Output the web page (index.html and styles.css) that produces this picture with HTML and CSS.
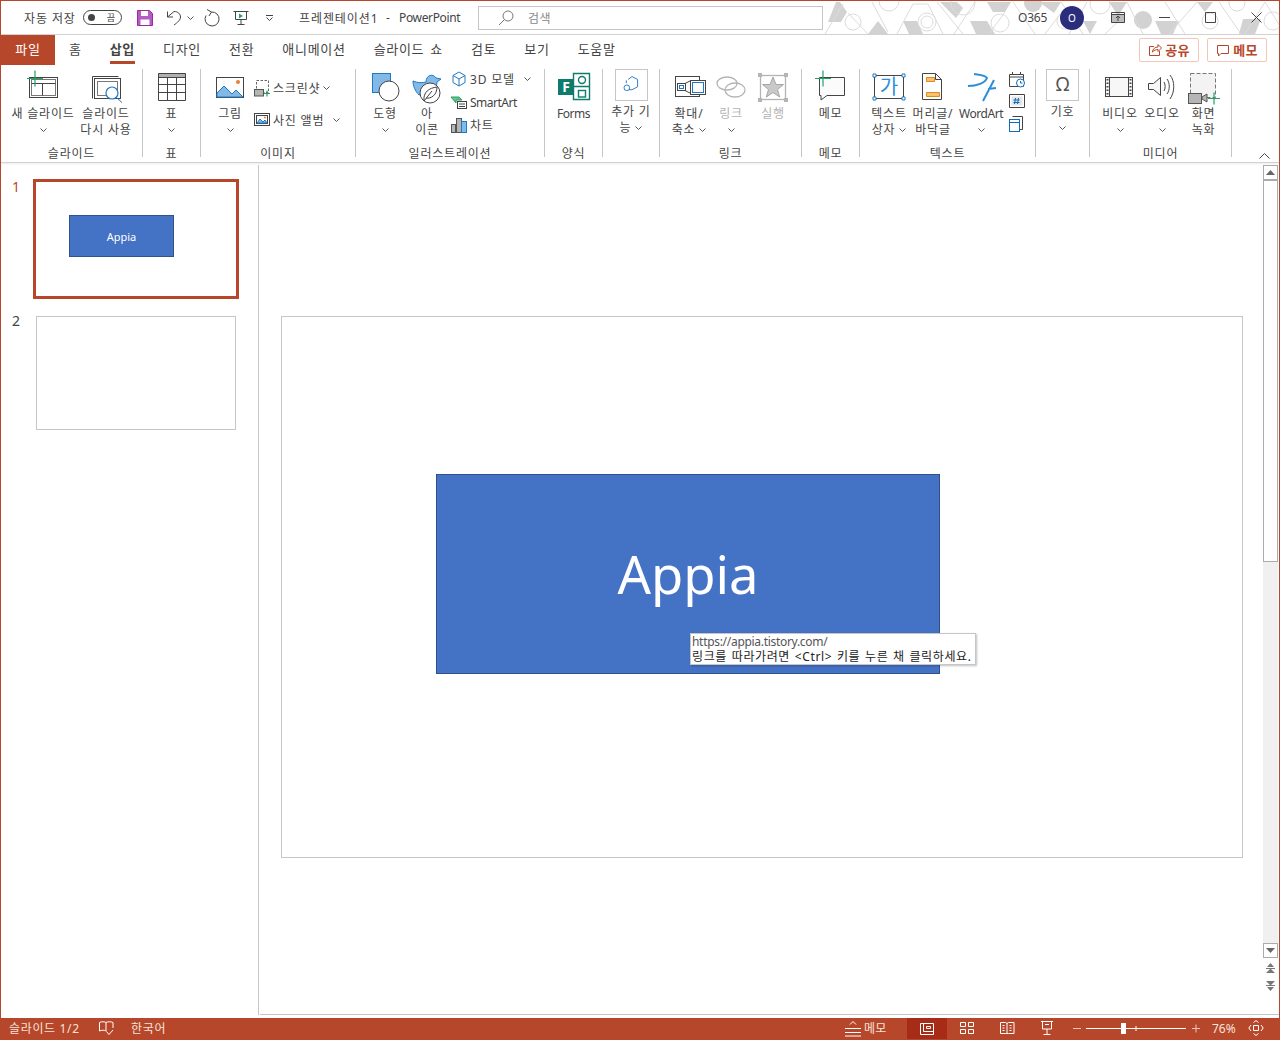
FILE: index.html
```html
<!DOCTYPE html>
<html lang="ko">
<head>
<meta charset="utf-8">
<title>프레젠테이션1 - PowerPoint</title>
<link rel="stylesheet" href="styles.css">
</head>
<body>
<div class="window">
  <header class="titlebar">
    <svg class="pattern" viewBox="0 0 455 33">
      <g class="pat-fill">
        <path d="M3 21L16 21 22 11 15 1 11 1z"/><path d="M43 33l10-13 10 13z"/><path d="M78 20h14l6 13H84z"/><path d="M115 1h17l6 6-7 10z"/><path d="M145 20h17l8 13h-19z"/><path d="M162 1h24l-6 10h-12z"/>
        <path d="M214 1h22l-7 11z"/><path d="M258 20h14l-7 13z"/><path d="M284 1h18l-9 14z"/><path d="M330 20h24l-6 13h-12z"/><path d="M372 1h16l-8 10z"/><path d="M418 18h18l-6 15h-16z"/>
      </g>
      <circle class="pat-solid" cx="318" cy="19" r="9"/><circle class="pat-solid" cx="208" cy="2" r="9"/>
      <g class="pat-line">
        <circle cx="28" cy="21" r="8"/><circle cx="64" cy="0" r="10"/><circle cx="102" cy="21" r="9"/><circle cx="102" cy="21" r="6"/><circle cx="138" cy="2" r="12"/><circle cx="175" cy="22" r="9"/>
        <circle cx="240" cy="20" r="8"/><circle cx="275" cy="3" r="10"/><circle cx="385" cy="20" r="8"/><circle cx="448" cy="20" r="9"/><circle cx="412" cy="2" r="8"/>
        <path d="M0 33L18 3M23 12l20 21M47 1l16 30M72 33L88 3 103 3 118 33M112 1l26 32M150 1L129 33M180 11l-16 22M188 1l22 32M236 12l-16 21M236 1l22 32M262 1l-18 32M300 14l-20 19M302 1l16 32M340 1l20 32M372 1l-28 32M394 1l22 32M440 1l-20 32M440 1l15 24"/>
      </g>
    </svg>
    <span class="tt autosave">자동 저장</span>
    <span class="toggle"><i class="toggle-dot"></i><b class="toggle-text">끔</b></span>
    <svg class="q save" viewBox="0 0 16 16"><path class="save-b" d="M.5.5h12l3 3v12H.5z"/><path class="save-w" d="M4 1h7v5H4zM3.500 9.500h9V15h-9z"/></svg>
    <svg class="q undo" viewBox="0 0 16 16"><path class="s" d="M1.500 1.500v5.500H7M1.800 6.800L8 1.500c4 0 6.500 2.500 6.500 5.500S11.500 12.500 8 15"/></svg>
    <svg class="chev chev-undo" viewBox="0 0 7 4"><path d="M.5.500l3 3 3-3"/></svg>
    <svg class="q redo" viewBox="0 0 17 17"><path class="s" d="M3 .5l4.500 2.500-2.500 4M7.500 3A7 7 0 1 1 2 6.500"/></svg>
    <svg class="q present" viewBox="0 0 16 16"><path class="s" d="M.5 1.500h15M2.500 1.500v8h11v-8M8 9.500v5M4.500 14.500h7"/><path class="f-green" d="M6 3.500l4 2.500-4 2.500z"/></svg>
    <svg class="qat" viewBox="0 0 7 6"><path class="s" d="M0 .5h7M.5 2.500l3 3 3-3"/></svg>
    <span class="tt doc-title">프레젠테이션1</span>
    <span class="tt doc-dash">-</span>
    <span class="tt doc-app">PowerPoint</span>
    <div class="search">
      <svg class="search-icon" viewBox="0 0 16 16"><circle class="s-mid" cx="10" cy="6" r="5"/><path class="s-mid" d="M6.500 9.500L1 15"/></svg>
      <span class="search-text">검색</span>
    </div>
    <span class="tt account">O365</span>
    <span class="avatar">O</span>
    <svg class="q display" viewBox="0 0 14 11"><path class="f-grey" d="M.5 2.500h13v8H.5z"/><path class="s" d="M.5.500h13v10H.5zM.5 2.500h13M7 9V4M5 6l2-2 2 2"/></svg>
    <svg class="q wmin" viewBox="0 0 11 1"><path class="s" d="M0 .5h11"/></svg>
    <svg class="q wmax" viewBox="0 0 11 11"><path class="s" d="M.5.500h10v10H.5z"/></svg>
    <svg class="q wclose" viewBox="0 0 11 11"><path class="s" d="M.5.500l10 10M10.500.500l-10 10"/></svg>
  </header>

  <nav class="tabs">
    <span class="tab-file">파일</span>
    <span class="tab">홈</span>
    <span class="tab tab-active"><span>삽입</span></span>
    <span class="tab">디자인</span>
    <span class="tab">전환</span>
    <span class="tab">애니메이션</span>
    <span class="tab">슬라이드 쇼</span>
    <span class="tab">검토</span>
    <span class="tab">보기</span>
    <span class="tab">도움말</span>
    <span class="action action-share">
      <svg class="action-icon" viewBox="0 0 14 14"><path class="s-acc" d="M6 3.500H1.500v9h10V8M4.500 9c0-3 2.500-5 5.500-5V1.500L13.500 5 10 8.500V6.500c-2 0-4 .8-5.500 2.500z"/></svg>공유
    </span>
    <span class="action action-memo">
      <svg class="action-icon" viewBox="0 0 14 14"><path class="s-acc" d="M1.500 2.500h11v8H5l-2.500 2.500v-2.500h-1z"/></svg>메모
    </span>
  </nav>

  <section class="ribbon">
    <div class="group g-slides">
      <div class="controls pad-10">
        <div class="btn w-64">
          <svg class="ico" viewBox="0 0 36 36"><rect class="f-white" x="4.500" y="8.500" width="28" height="20"/><rect class="s-mid" x="6.500" y="10.500" width="24" height="16"/><path class="s" d="M6.500 14.500h24M17.500 14.500v12"/><path class="s-green" d="M2 9.500h16M10 1.500v16"/></svg>
          <span class="lbl">새 슬라이드<br><svg class="chev" viewBox="0 0 7 4"><path d="M.5.500l3 3 3-3"/></svg></span>
        </div>
        <div class="btn w-62">
          <svg class="ico" viewBox="0 0 36 36"><path class="s" d="M4.500 7.500h26M4.500 7.500v22"/><rect class="f-white" x="6.500" y="9.500" width="26" height="20"/><rect class="s-mid" x="9.500" y="12.500" width="20" height="14"/><circle class="f-white-b" cx="24" cy="24" r="6"/><path class="s-blue" d="M28.500 28.500l5.500 5"/></svg>
          <span class="lbl">슬라이드<br>다시 사용</span>
        </div>
      </div>
      <div class="glabel">슬라이드</div>
    </div>

    <div class="group g-table">
      <div class="controls center">
        <div class="btn w-42">
          <svg class="ico" viewBox="0 0 36 36"><rect class="f-grey2" x="4" y="4" width="28" height="4.500"/><path class="s" d="M4.500 4.500h27v27h-27zM4.500 8.500h27M4.500 15.500h27M4.500 23.500h27M13.500 8.500v23M22.500 8.500v23"/></svg>
          <span class="lbl">표<br><svg class="chev" viewBox="0 0 7 4"><path d="M.5.500l3 3 3-3"/></svg></span>
        </div>
      </div>
      <div class="glabel">표</div>
    </div>

    <div class="group g-images">
      <div class="controls pad-9">
        <div class="btn w-40">
          <svg class="ico" viewBox="0 0 36 36"><rect class="f-white" x="4.500" y="8.500" width="27" height="20"/><path class="f-blue" d="M5 24l7-7 8 8 4-4 7 7v0H5z"/><circle class="f-orange" cx="26" cy="13" r="2"/></svg>
          <span class="lbl">그림<br><svg class="chev" viewBox="0 0 7 4"><path d="M.5.500l3 3 3-3"/></svg></span>
        </div>
        <div class="smalls smalls-images">
          <div class="small">
            <svg class="sico" viewBox="0 0 16 18"><rect class="s-dash" x="2.500" y="1.500" width="12" height="12"/><rect class="f-cam" x=".5" y="10.500" width="9" height="6.500"/><path class="s-green" d="M10 14.500h6M13 11.500v6"/></svg>
            <span>스크린샷</span><svg class="chev m-6" viewBox="0 0 7 4"><path d="M.5.500l3 3 3-3"/></svg>
          </div>
          <div class="small">
            <svg class="sico" viewBox="0 0 16 18"><rect class="s" x=".5" y="2.500" width="15" height="12"/><rect class="f-white" x="2.500" y="4.500" width="11" height="8"/><path class="f-blue" d="M3 12l3-4 3 3 2-2 2 3z"/><circle class="f-orange" cx="11" cy="6.500" r="1"/></svg>
            <span>사진 앨범</span><svg class="chev m-13" viewBox="0 0 7 4"><path d="M.5.500l3 3 3-3"/></svg>
          </div>
        </div>
      </div>
      <div class="glabel">이미지</div>
    </div>

    <div class="group g-illus">
      <div class="controls pad-9">
        <div class="btn w-40">
          <svg class="ico" viewBox="0 0 36 36"><rect class="f-blue" x="5.500" y="4.500" width="18" height="19"/><circle class="f-white" cx="22" cy="22" r="10"/></svg>
          <span class="lbl">도형<br><svg class="chev" viewBox="0 0 7 4"><path d="M.5.500l3 3 3-3"/></svg></span>
        </div>
        <div class="btn w-44">
          <svg class="ico" viewBox="0 0 36 36"><path class="f-blue" d="M4 12c4 2 10 2 13 1 0-7 7-9 10-4l5 1-4 3c0 4-2 7-4 9L10 26C6 22 4 17 4 12z"/><circle class="f-white" cx="21" cy="24" r="10"/><path class="s" d="M15 32c-1-9 5-13 13-14 0 8-6 12-11 11M15 32l8-10"/></svg>
          <span class="lbl">아<br>이콘</span>
        </div>
        <div class="smalls smalls-illus">
          <div class="small">
            <svg class="sico" viewBox="0 0 16 18"><path class="s-blue" d="M8 2l6 3.500v7L8 16l-6-3.500v-7zM2 5.500L8 9l6-3.500M8 9v7"/></svg>
            <span>3D 모델</span><svg class="chev m-10" viewBox="0 0 7 4"><path d="M.5.500l3 3 3-3"/></svg>
          </div>
          <div class="small">
            <svg class="sico" viewBox="0 0 16 18"><path class="f-smart" d="M0 4h8l3 3H5v3z"/><rect class="f-white" x="6.500" y="8.500" width="9" height="7"/><path class="s" d="M8 11h6M8 13.500h6"/></svg>
            <span class="latin-tight">SmartArt</span>
          </div>
          <div class="small">
            <svg class="sico" viewBox="0 0 16 18"><rect class="f-cam" x=".5" y="8.500" width="4" height="8"/><rect class="f-cam" x="5.500" y="2.500" width="5" height="14"/><rect class="f-blue" x="10.500" y="5.500" width="5" height="11"/></svg>
            <span>차트</span>
          </div>
        </div>
      </div>
      <div class="glabel">일러스트레이션</div>
    </div>

    <div class="group g-forms">
      <div class="controls center">
        <div class="btn w-42">
          <svg class="ico" viewBox="0 0 36 36"><path class="s-teal" d="M17.500 4.500h16v26h-16zM18 17.500h15"/><circle class="s-teal" cx="26" cy="11" r="3.500"/><rect class="s-teal" x="22.500" y="21.500" width="7" height="6.500"/><rect class="f-teal" x="2" y="10" width="16" height="16"/><text class="forms-f" x="10" y="23">F</text></svg>
          <span class="lbl latin">Forms</span>
        </div>
      </div>
      <div class="glabel">양식</div>
    </div>

    <div class="group g-addin">
      <div class="controls center">
        <div class="btn w-46">
          <div class="box">
            <svg class="box-ico" viewBox="0 0 33 32"><path class="s-blue" d="M13 10l4-3 6 3v8l-6 3h-3M11 14v-3"/><circle class="s-blue" cx="11.500" cy="19" r="3"/></svg>
          </div>
          <span class="lbl lbl-box">추가 기<br>능 <svg class="chev" viewBox="0 0 7 4"><path d="M.5.500l3 3 3-3"/></svg></span>
        </div>
      </div>
    </div>

    <div class="group g-links">
      <div class="controls pad-8">
        <div class="btn w-42">
          <svg class="ico" viewBox="0 0 36 36"><rect class="s" x="4.500" y="7.500" width="24" height="20"/><rect class="s" x="6.500" y="14.500" width="8" height="7"/><rect class="s-blue" x="8.500" y="16.500" width="4" height="3"/><path class="s" d="M14 14.500l6-3M14 21.500l6 3"/><rect class="f-white" x="19.500" y="11.500" width="15" height="14"/><rect class="s-blue" x="21.500" y="13.500" width="11" height="10"/></svg>
          <span class="lbl">확대/<br>축소 <svg class="chev" viewBox="0 0 7 4"><path d="M.5.500l3 3 3-3"/></svg></span>
        </div>
        <div class="btn w-42 disabled">
          <svg class="ico" viewBox="0 0 36 36"><ellipse class="s-dis" cx="14" cy="14.500" rx="10" ry="6.500"/><ellipse class="s-dis" cx="22" cy="21" rx="10" ry="7"/></svg>
          <span class="lbl">링크<br><svg class="chev" viewBox="0 0 7 4"><path d="M.5.500l3 3 3-3"/></svg></span>
        </div>
        <div class="btn w-42 disabled">
          <svg class="ico" viewBox="0 0 36 36"><rect class="s-dis" x="5.500" y="6.500" width="25" height="24"/><path class="f-dis" d="M3 4h4v4H3zM29 4h4v4h-4zM3 29h4v4H3zM29 29h4v4h-4z"/><path class="f-star" d="M18 8l3 7.500h7.500l-6 5 2.200 7.500-6.700-4.500-6.700 4.500 2.200-7.500-6-5H15z"/></svg>
          <span class="lbl">실행</span>
        </div>
      </div>
      <div class="glabel">링크</div>
    </div>

    <div class="group g-memo">
      <div class="controls center">
        <div class="btn w-42">
          <svg class="ico" viewBox="0 0 36 36"><path class="f-bubble" d="M6.500 8.500h25v18H14l-6 4.500v-4.500H6.500z"/><path class="s-green" d="M2 9.500h16M10 1.500v16"/></svg>
          <span class="lbl">메모</span>
        </div>
      </div>
      <div class="glabel">메모</div>
    </div>

    <div class="group g-text">
      <div class="controls pad-7">
        <div class="btn w-44">
          <svg class="ico" viewBox="0 0 36 36"><rect class="s" x="3.500" y="6.500" width="29" height="23"/><text class="tb-text" x="18" y="25">가</text><path class="f-handle" d="M2 5h3v3H2zM31 5h3v3h-3zM2 28h3v3H2zM31 28h3v3h-3z"/></svg>
          <span class="lbl">텍스트<br>상자 <svg class="chev" viewBox="0 0 7 4"><path d="M.5.500l3 3 3-3"/></svg></span>
        </div>
        <div class="btn w-44">
          <svg class="ico" viewBox="0 0 36 36"><path class="f-white" d="M7.500 4.500h13l6 6v20h-19zM20.500 4.500v6h6"/><path class="f-orng" d="M11.500 8.500h8v4h-8zM11.500 23.500h13v4h-13z"/></svg>
          <span class="lbl">머리글/<br>바닥글</span>
        </div>
        <div class="btn w-52">
          <svg class="ico" viewBox="0 0 36 36"><path class="s-wa" d="M11 5c6 1 11 1 13 4-2 5-10 8-19 8M31 11L20 32M25 20l8-1"/></svg>
          <span class="lbl latin">WordArt<br><svg class="chev" viewBox="0 0 7 4"><path d="M.5.500l3 3 3-3"/></svg></span>
        </div>
        <div class="icons-col">
          <svg class="mini" viewBox="0 0 16 16"><path class="s" d="M.5 2.500h14v12H.5zM.5 5h14M3.500 0v3M11.500 0v3"/><circle class="f-clock" cx="11.500" cy="11" r="4"/><path class="s-blue2" d="M11.500 9v2h2"/></svg>
          <svg class="mini mini-num" viewBox="0 0 16 14"><path class="s" d="M.5.500h15v13H.5z"/><rect class="f-light" x="2.500" y="2.500" width="11" height="9"/><path class="s-blue2" d="M6.500 4l-1 6M9.500 4l-1 6M4.500 6h6M4.500 8.500h6"/></svg>
          <svg class="mini mini-obj" viewBox="0 0 16 16"><path class="s" d="M3.500.500h10v13H11"/><rect class="f-obj" x=".5" y="3.500" width="10" height="12"/><path class="s-blue2" d="M.5 6.500h10"/></svg>
        </div>
      </div>
      <div class="glabel">텍스트</div>
    </div>

    <div class="group g-symbol">
      <div class="controls center">
        <div class="btn w-46">
          <div class="box omega">Ω</div>
          <span class="lbl lbl-box">기호<br><svg class="chev" viewBox="0 0 7 4"><path d="M.5.500l3 3 3-3"/></svg></span>
        </div>
      </div>
    </div>

    <div class="group g-media">
      <div class="controls pad-9">
        <div class="btn w-42">
          <svg class="ico" viewBox="0 0 36 36"><rect class="f-film" x="3.500" y="8.500" width="27" height="19"/><path class="s" d="M7.500 8.500v19M26.500 8.500v19"/><path class="s-film" d="M5.500 10v16M28.500 10v16"/></svg>
          <span class="lbl">비디오<br><svg class="chev" viewBox="0 0 7 4"><path d="M.5.500l3 3 3-3"/></svg></span>
        </div>
        <div class="btn w-42">
          <svg class="ico" viewBox="0 0 36 36"><path class="f-film" d="M4.500 14.500h5l7-6v18l-7-6h-5z"/><path class="s" d="M20 13c1.500 2 1.500 7 0 9M23 10c3 4 3 11 0 15M26 6c5 6 5 17 0 24"/></svg>
          <span class="lbl">오디오<br><svg class="chev" viewBox="0 0 7 4"><path d="M.5.500l3 3 3-3"/></svg></span>
        </div>
        <div class="btn w-41">
          <svg class="ico" viewBox="0 0 36 36"><rect class="s-dash-l" x="4.500" y="4.500" width="25" height="24"/><rect class="f-cam" x="2.500" y="24.500" width="13" height="10"/><path class="f-cam" d="M16 28l5-3v8l-5-3z"/><path class="s-green" d="M22 29.500h12M28 23.500v12"/></svg>
          <span class="lbl">화면<br>녹화</span>
        </div>
      </div>
      <div class="glabel">미디어</div>
    </div>
    <svg class="collapse" viewBox="0 0 11 6"><path class="s" d="M.5 5.500l5-5 5 5"/></svg>
  </section>

  <main class="main">
    <aside class="thumbs">
      <div class="thumb-row">
        <span class="thumb-num thumb-num-on">1</span>
        <div class="thumb thumb-on"><div class="mini-shape">Appia</div></div>
      </div>
      <div class="thumb-row thumb-row-2">
        <span class="thumb-num thumb-num-2">2</span>
        <div class="thumb thumb-off"></div>
      </div>
    </aside>
    <div class="stage">
      <div class="editor">
        <div class="slide">
          <div class="shape">Appia</div>
          <div class="tooltip"><span class="tip-url">https://appia.tistory.com/</span><br><strong>링크를 따라가려면 &lt;Ctrl&gt; 키를 누른 채 클릭하세요.</strong></div>
        </div>
      </div>
      <div class="vscroll">
        <div class="sb-btn"><svg class="sb-tri" viewBox="0 0 9 5"><path d="M4.500 0L9 5H0z"/></svg></div>
        <div class="sb-thumb"></div>
        <div class="sb-track"></div>
        <div class="sb-btn"><svg class="sb-tri" viewBox="0 0 9 5"><path d="M0 0h9L4.500 5z"/></svg></div>
        <svg class="sb-page" viewBox="0 0 9 10"><path d="M4.500 0L8 4H1zM0 5h9L9 6H0zM4.500 5.500L9 10H0z"/></svg>
        <svg class="sb-page" viewBox="0 0 9 10"><path d="M0 0h9L4.500 4.500zM0 4h9v1H0zM1 6h7L4.500 10z"/></svg>
      </div>
    </div>
  </main>

  <footer class="status">
    <span class="st-slide">슬라이드 1/2</span>
    <svg class="st-book" viewBox="0 0 15 14"><path class="s-w" d="M.5 1.500c2-1 5-1 6.500 0v8.500c-1.500-1-4.500-1-6.500 0zM7 1.500c1.500-1 5-1 7 0V7M7.500 10.500l2.500 3 4-4.500"/></svg>
    <span class="st-lang">한국어</span>
    <span class="st-spacer"></span>
    <svg class="st-memo-ico" viewBox="0 0 17 17"><path class="s-w" d="M0 8.500h16M0 12.500h16M0 16h16M5 4.500l3-3 3 3"/></svg>
    <span class="st-memo">메모</span>
    <span class="st-active"><svg class="st-ico" viewBox="0 0 14 12"><path class="s-w" d="M.5.500h13v11H.5zM3.500.500v8h10M6.500 3.500h4v2h-4z"/></svg></span>
    <svg class="st-ico st-sorter" viewBox="0 0 14 12"><path class="s-w" d="M.5.500h5v4h-5zM8.500.500h5v4h-5zM.5 7.500h5v4h-5zM8.500 7.500h5v4h-5z"/></svg>
    <svg class="st-ico st-reader" viewBox="0 0 14 12"><path class="s-w" d="M.5.500h5l1.500 1 1.500-1h5.500v11H8.500L7 11.500 5.500 11.500h-5zM7 1.500v10M2.500 3.500h2M2.500 6h2M2.500 8.500h2M9.500 3.500h2M9.500 6h2M9.500 8.500h2"/></svg>
    <svg class="st-ico st-show" viewBox="0 0 14 14"><path class="s-w" d="M1 .5h12M2.500.5v7.500h9V.5M7 8v5M3.500 13.500h7M5 3.500h4"/></svg>
    <svg class="st-zoom" viewBox="0 0 126 14"><path class="s-dim" d="M0 7.500h8M119 7.500h8M123 3.500v8"/><path class="s-w" d="M13 7.500h100M63 5v5"/><rect class="f-w" x="48" y="2" width="5" height="11"/></svg>
    <span class="st-pct">76%</span>
    <svg class="st-fit" viewBox="0 0 16 16"><path class="s-w" d="M5.500 5.500h5v5h-5zM3 5L.8 8 3 11M13 5l2.200 3L13 11M5.500 2.500L8 .5l2.500 2M5.500 13.500L8 15.500l2.500-2"/></svg>
  </footer>
</div>
</body>
</html>
```

FILE: styles.css
```css
* { box-sizing: border-box; }
html, body { margin: 0; padding: 0; background: #fff; }
body { font-family: "Noto Sans", "Noto Sans CJK KR", sans-serif; font-size: 12px; color: #444; }

.window { position: relative; width: 1280px; height: 1040px; border: 1px solid #b7472a; border-bottom: 0; display: flex; flex-direction: column; overflow: hidden; }

/* shared svg paint */
svg { display: block; flex: none; overflow: visible; }
.s { fill: none; stroke: #444; }
.s-mid { fill: none; stroke: #777; }
.s-blue { fill: none; stroke: #1e7ac6; }
.s-blue2 { fill: none; stroke: #0f6cbd; }
.s-green { fill: none; stroke: #21a366; stroke-width: 1.2; }
.s-teal { fill: none; stroke: #0f7b6c; stroke-width: 1.4; }
.s-dash { fill: none; stroke: #666; stroke-dasharray: 2.500 1.500; }
.s-dash-l { fill: #f3f3f3; stroke: #777; stroke-dasharray: 4 2; }
.s-dis { fill: none; stroke: #b4b4b4; stroke-width: 1.300; }
.s-film { fill: none; stroke: #444; stroke-width: 2; stroke-dasharray: 1.500 2; }
.s-wa { fill: none; stroke: #2b8fd8; stroke-width: 2; }
.s-acc { fill: none; stroke: #b7472a; }
.s-w { fill: none; stroke: #fff; }
.s-dim { fill: none; stroke: #e9c6ba; }
.f-w { fill: #fff; }
.f-white { fill: #fff; stroke: #444; }
.f-white-b { fill: #fff; stroke: #1e7ac6; stroke-width: 1.200; }
.f-blue { fill: #83b9e6; stroke: #1e7ac6; }
.f-orange { fill: #ed7d31; }
.f-orng { fill: #f7c16e; stroke: #e08a1e; }
.f-grey { fill: #bdbdbd; }
.f-grey2 { fill: #b0b0b0; }
.f-cam { fill: #b5b5b5; stroke: #555; }
.f-green { fill: #21a366; }
.f-smart { fill: #6fbf8b; stroke: #21a366; }
.f-teal { fill: #0f7b6c; }
.f-dis { fill: #b4b4b4; }
.f-star { fill: #c9c9c9; stroke: #a6a6a6; }
.f-bubble { fill: #fbfbfb; stroke: #444; }
.f-handle { fill: #fff; stroke: #1e7ac6; }
.f-clock { fill: #fff; stroke: #0f6cbd; }
.f-light { fill: #e4e4e4; }
.f-obj { fill: #fff; stroke: #0f6cbd; }
.f-film { fill: #f7f7f7; stroke: #444; }
.chev { display: inline-block; width: 7px; height: 4px; vertical-align: 2px; }
.chev path { fill: none; stroke: #555; }

/* title bar */
.titlebar { position: relative; flex: none; height: 34px; display: flex; align-items: center; border-bottom: 1px solid #d2d2d2; }
.pattern { position: absolute; left: 824px; top: 0; width: 455px; height: 33px; }
.pat-fill { fill: #d2d2d2; }
.pat-solid { fill: #d2d2d2; }
.pat-line { fill: none; stroke: #dcdcdc; }
.tt { position: relative; white-space: nowrap; color: #444; }
.autosave { margin-left: 23px; width: 52px; letter-spacing: .9px; }
.toggle { margin-left: 7px; width: 39px; height: 15px; border: 1px solid #444; border-radius: 8px; display: flex; align-items: center; justify-content: space-between; padding: 0 6px 0 4px; }
.toggle-dot { width: 7px; height: 7px; border-radius: 50%; background: #444; }
.toggle-text { font-weight: 400; font-size: 9px; line-height: 12px; }
.q { position: relative; }
.save { margin-left: 15px; width: 16px; height: 16px; }
.save-b { fill: #b65ac4; stroke: #9b2a9e; }
.save-w { fill: #fff; }
.undo { margin-left: 13px; width: 16px; height: 16px; }
.chev-undo { margin-left: 5px; }
.redo { margin-left: 10px; width: 17px; height: 17px; }
.present { margin-left: 12px; width: 16px; height: 16px; }
.qat { margin-left: 17px; width: 7px; height: 6px; }
.doc-title { margin-left: 26px; width: 80px; letter-spacing: .9px; }
.doc-dash { margin-left: 7px; width: 6px; }
.doc-app { margin-left: 7px; width: 62px; letter-spacing: -.35px; }
.search { margin-left: 17px; width: 345px; height: 24px; border: 1px solid #c6c6c6; background: #fff; display: flex; align-items: center; position: relative; }
.search-icon { margin-left: 19px; width: 16px; height: 16px; }
.search-text { margin-left: 14px; color: #888; letter-spacing: .5px; }
.account { margin-left: 195px; width: 31px; letter-spacing: -.2px; }
.avatar { position: relative; margin-left: 11px; width: 24px; height: 24px; border-radius: 50%; background: #2b2d7c; color: #fff; font-size: 10px; line-height: 24px; text-align: center; }
.display { margin-left: 27px; width: 14px; height: 11px; }
.wmin { margin-left: 34px; width: 11px; height: 1px; }
.wmax { margin-left: 35px; width: 11px; height: 11px; }
.wclose { margin-left: 35px; width: 11px; height: 11px; }

/* tabs */
.tabs { flex: none; height: 30px; display: flex; align-items: center; font-size: 13px; }
.tab-file { width: 54px; height: 30px; background: #b7472a; color: #fff; line-height: 28px; text-align: center; letter-spacing: .7px; }
.tab { margin-left: 14px; margin-right: 14px; white-space: nowrap; line-height: 20px; letter-spacing: .7px; word-spacing: 2px; position: relative; top: -1px; }
.tab-active { font-weight: 700; }
.tab-active span { display: block; padding-bottom: 2px; border-bottom: 3px solid #b7472a; margin-bottom: -5px; }
.action { height: 24px; width: 60px; margin-top: -1px; border: 1px solid #f2c6b8; border-radius: 2px; color: #b7472a; font-size: 13px; font-weight: 700; letter-spacing: .3px; display: flex; align-items: center; justify-content: center; gap: 3px; }
.action-share { margin-left: auto; }
.action-memo { margin-left: 8px; margin-right: 12px; }
.action-icon { width: 14px; height: 14px; }

/* ribbon */
.ribbon { position: relative; flex: none; height: 98px; display: flex; align-items: flex-start; padding-top: 4px; border-bottom: 1px solid #d2d2d2; box-shadow: 0 1px 2px rgba(0,0,0,.08); }
.group { flex: none; height: 88px; border-right: 1px solid #c6c6c6; display: flex; flex-direction: column; }
.g-slides { width: 142px; } .g-table { width: 58px; } .g-images { width: 155px; } .g-illus { width: 189px; }
.g-forms { width: 58px; } .g-addin { width: 57px; } .g-links { width: 142px; } .g-memo { width: 58px; }
.g-text { width: 176px; } .g-symbol { width: 54px; } .g-media { width: 142px; }
.controls { flex: none; height: 76px; display: flex; align-items: flex-start; }
.center { justify-content: center; }
.pad-7 { padding-left: 7px; } .pad-8 { padding-left: 8px; } .pad-9 { padding-left: 9px; } .pad-10 { padding-left: 10px; }
.glabel { height: 12px; line-height: 18px; text-align: center; white-space: nowrap; letter-spacing: .8px; }
.btn { flex: none; display: flex; flex-direction: column; align-items: center; }
.w-40 { width: 40px; } .w-41 { width: 41px; } .w-42 { width: 42px; } .w-44 { width: 44px; } .w-46 { width: 46px; } .w-52 { width: 52px; } .w-62 { width: 62px; } .w-64 { width: 64px; }
.ico { width: 36px; height: 36px; }
.lbl { display: block; margin-top: 1px; text-align: center; line-height: 16px; white-space: nowrap; letter-spacing: .8px; }
.lbl.latin { letter-spacing: -.45px; }
.latin-tight { letter-spacing: -.5px; }
.lbl-box { margin-top: 3px; }
.disabled .lbl { color: #b1b1b1; }
.box { width: 33px; height: 32px; border: 1px solid #c6c6c6; }
.box-ico { width: 31px; height: 30px; }
.omega { font-size: 19px; line-height: 29px; text-align: center; color: #555; }
.smalls { margin-left: 4px; display: flex; flex-direction: column; }
.smalls-images { padding-top: 10px; gap: 14px; }
.smalls-illus { margin-left: 2px; padding-top: 1px; gap: 5px; }
.small { height: 18px; display: flex; align-items: center; gap: 3px; white-space: nowrap; letter-spacing: .8px; }
.sico { width: 16px; height: 18px; }
.m-6 { margin-left: 0; } .m-10 { margin-left: 6px; } .m-13 { margin-left: 6px; }
.forms-f { fill: #fff; font-size: 14px; font-weight: 700; text-anchor: middle; }
.tb-text { fill: #2b8fd8; font-size: 20px; text-anchor: middle; }
.icons-col { margin-left: 2px; padding-top: 3px; display: flex; flex-direction: column; }
.mini { width: 16px; height: 16px; }
.mini-num { margin-top: 6px; height: 14px; }
.mini-obj { margin-top: 8px; }
.collapse { position: absolute; right: 9px; top: 88px; width: 11px; height: 6px; }

/* main area */
.main { flex: 1; min-height: 0; display: flex; }
.thumbs { flex: none; width: 258px; margin-top: 2px; margin-bottom: 3px; border-right: 1px solid #c6c6c6; padding-top: 14px; }
.thumb-row { display: flex; padding-left: 11px; }
.thumb-row-2 { margin-top: 17px; }
.thumb-num { width: 21px; font-size: 14px; line-height: 16px; }
.thumb-num-on { color: #b7472a; }
.thumb-num-2 { width: 24px; margin-top: -3px; }
.thumb { background: #fff; }
.thumb-on { width: 206px; height: 120px; border: 3px solid #b7472a; padding: 33px 0 0 33px; }
.thumb-off { width: 200px; height: 114px; border: 1px solid #c6c6c6; }
.mini-shape { width: 105px; height: 42px; background: #4472c4; border: 1px solid #2f528f; color: #fff; font-size: 11px; line-height: 42px; text-align: center; }
.stage { flex: 1; min-width: 0; margin-bottom: 3px; display: flex; border-bottom: 1px solid #c6c6c6; margin-left: 1px; }
.editor { flex: 1; padding: 153px 0 0 21px; }
.slide { position: relative; width: 962px; height: 542px; border: 1px solid #c6c6c6; background: #fff; }
.shape { position: absolute; left: 154px; top: 157px; width: 504px; height: 200px; background: #4472c4; border: 1px solid #2f528f; color: #fff; font-size: 52.5px; line-height: 198px; text-align: center; }
.tooltip { position: absolute; left: 408px; top: 316px; width: 286px; height: 32px; padding: 0 0 0 1px; background: #fff; border: 1px solid #c6c6c6; box-shadow: 1px 1px 2px rgba(0,0,0,.25); font-size: 12px; line-height: 15px; white-space: nowrap; color: #555; }
.tip-url { letter-spacing: -.3px; }
.tooltip strong { font-weight: 400; color: #222; letter-spacing: .62px; word-spacing: 1px; }
.vscroll { flex: none; width: 15px; padding-top: 2px; margin-right: 1px; display: flex; flex-direction: column; align-items: center; }
.sb-btn { flex: none; width: 15px; height: 15px; border: 1px solid #ababab; display: flex; align-items: center; justify-content: center; }
.sb-tri { width: 9px; height: 5px; fill: #666; }
.sb-thumb { flex: none; width: 15px; height: 382px; border: 1px solid #ababab; }
.sb-track { flex: none; width: 15px; height: 381px; background: #f0f0f0; }
.sb-page { width: 9px; height: 10px; fill: #777; }
.sb-btn + .sb-page { margin-top: 5px; }
.sb-page + .sb-page { margin-top: 8px; }

/* status bar */
.status { flex: none; height: 22px; margin: 0 -1px; padding-bottom: 2px; background: #b7472a; color: #f6e4dc; display: flex; align-items: center; }
.st-slide { margin-left: 9px; width: 72px; white-space: nowrap; letter-spacing: .65px; }
.st-book { margin-left: 18px; width: 15px; height: 14px; }
.st-lang { margin-left: 17px; white-space: nowrap; letter-spacing: .7px; }
.st-spacer { flex: 1; }
.st-memo-ico { width: 17px; height: 17px; }
.st-memo { margin-left: 2px; width: 24px; white-space: nowrap; letter-spacing: .2px; }
.st-active { margin-left: 19px; width: 40px; height: 21px; align-self: flex-start; background: #a62c18; display: flex; align-items: center; justify-content: center; }
.st-ico { width: 14px; height: 12px; }
.st-sorter { margin-left: 13px; }
.st-reader { margin-left: 26px; }
.st-show { margin-left: 26px; height: 14px; }
.st-zoom { margin-left: 19px; width: 126px; height: 14px; }
.st-pct { margin-left: 13px; width: 25px; white-space: nowrap; }
.st-fit { margin-left: 11px; margin-right: 16px; width: 16px; height: 16px; }
```
